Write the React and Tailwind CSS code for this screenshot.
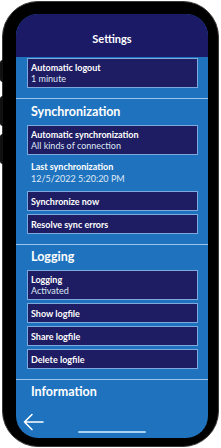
import React from 'react';

const font = { fontFamily: 'Lato, "Open Sans", sans-serif' };

const Card = ({ title, sub, className = '' }) => (
    <div className={`mx-[11px] mr-[10px] bg-[#1e1c62] border border-[#7ea9dd] px-[3px] flex flex-col justify-center ${sub ? 'h-[30px]' : 'h-[20px]'} ${className}`}>
        <div className="text-[9px] font-bold text-white leading-[11px]">{title}</div>
        {sub && <div className="text-[9px] text-[#dfe8f5] leading-[11px]">{sub}</div>}
    </div>
);

const Heading = ({ children, className = '' }) => (
    <div className={`px-[15px] text-[12.5px] font-bold text-white flex items-center ${className}`}>{children}</div>
);

const Divider = () => <div className="h-px bg-[#9cc4ec]" />;

const App = () => {
    return (
        <div className="w-[221px] h-[448px] bg-white relative overflow-hidden" style={font}>
            {/* side buttons */}
            <div className="absolute left-0 top-[60px] w-[3px] h-[22px] bg-[#111] rounded-l-sm" />
            <div className="absolute left-0 top-[96px] w-[3px] h-[30px] bg-[#111] rounded-l-sm" />
            <div className="absolute left-0 top-[134px] w-[3px] h-[30px] bg-[#111] rounded-l-sm" />

            <div className="ml-[2px] mr-[2px] mt-[1px] h-[446px] rounded-[36px] bg-black border border-[#3a3a3a] pt-[12px] pl-[13px] pr-[10px] pb-[8px] flex">
                <div className="flex-1 rounded-[22px] overflow-hidden flex flex-col bg-[#1f73be]">
                    {/* header */}
                    <div className="h-[43px] bg-[#1b1a67] flex items-end justify-center pb-[10px]">
                        <span className="text-[11px] font-bold text-white">Settings</span>
                    </div>

                    <Card title="Automatic logout" sub="1 minute" className="mt-px" />
                    <div className="h-[10px]" />
                    <Divider />

                    <Heading className="h-[26px]">Synchronization</Heading>
                    <Card title="Automatic synchronization" sub="All kinds of connection" />
                    <div className="h-[36px] px-[15px] flex flex-col justify-center">
                        <div className="text-[9px] font-bold text-white leading-[12px]">Last synchronization</div>
                        <div className="text-[9px] text-[#dfe8f5] leading-[12px]">12/5/2022 5:20:20 PM</div>
                    </div>
                    <Card title="Synchronize now" />
                    <Card title="Resolve sync errors" className="mt-[3px]" />
                    <div className="h-[10px]" />
                    <Divider />

                    <Heading className="h-[25px]">Logging</Heading>
                    <Card title="Logging" sub="Activated" />
                    <Card title="Show logfile" className="mt-[3px]" />
                    <Card title="Share logfile" className="mt-[3px]" />
                    <Card title="Delete logfile" className="mt-[3px]" />
                    <div className="h-[10px]" />
                    <Divider />

                    <Heading className="h-[24px]">Information</Heading>

                    <div className="flex-1 relative">
                        <svg className="absolute left-[7px] top-[9px]" width="21" height="18" viewBox="0 0 21 18" fill="none" stroke="white" strokeWidth="1.6" strokeLinecap="round" strokeLinejoin="round">
                            <path d="M20 9H1.5M9 1.5L1.5 9L9 16.5" />
                        </svg>
                        <div className="absolute left-[62px] bottom-[5px] w-[68px] h-[2.5px] rounded-full bg-[#a9d2f2]" />
                    </div>
                </div>
            </div>
        </div>
    );
};

export default App;
